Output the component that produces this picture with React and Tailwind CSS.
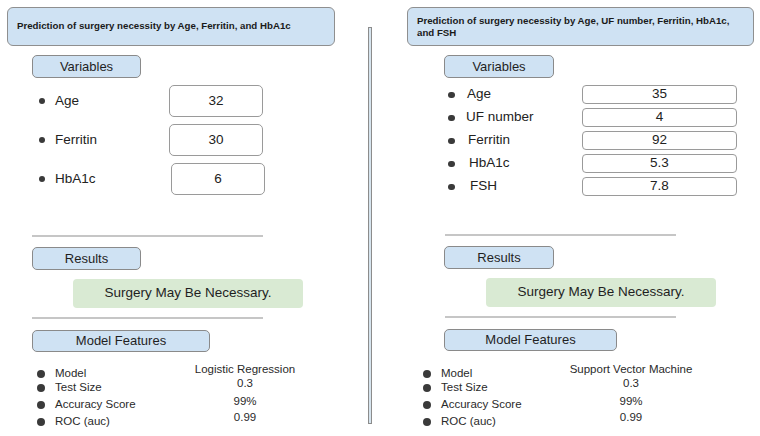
const font = { fontFamily: '"Liberation Sans", Arial, sans-serif' };

function Pill({ children, className = "" }) {
    return (
        <div className={`flex items-center justify-center rounded-[5px] border border-[#8a8a8a] bg-[#cfe2f3] text-[13px] text-[#1f1f1f] ${className}`}>
            {children}
        </div>
    );
}

function Divider() {
    return <div className="h-[2px] w-[231px] bg-[#c6c6c6]" />;
}

function Dot({ className = "" }) {
    return <span className={`block shrink-0 rounded-full bg-[#3a3a3a] ${className}`} />;
}

function Features({ model }) {
    const rows = [
        { label: "Model", value: model, lh: "h-[14px]", vh: "h-[14px]" },
        { label: "Test Size", value: "0.3", lh: "h-[14px] mt-[0px]", vh: "h-[14px] mt-[0px]" },
        { label: "Accuracy Score", value: "99%", lh: "h-[14px] mt-[3px]", vh: "h-[14px] mt-[4px]" },
        { label: "ROC (auc)", value: "0.99", lh: "h-[14px] mt-[3px]", vh: "h-[14px] mt-[2px]" },
    ];

    return (
        <div className="flex text-[11.5px] text-[#2a2a2a]">
            <div className="w-[138px] pt-[367px]">
                {rows.map((r) => (
                    <div key={r.label} className={`flex items-center ${r.lh}`}>
                        <Dot className="h-[8px] w-[8px]" />
                        <span className="ml-[10px] leading-none">{r.label}</span>
                    </div>
                ))}
            </div>
            <div className="w-[140px] pt-[363px]">
                {rows.map((r) => (
                    <div key={r.label} className={`flex items-center justify-center ${r.vh}`}>
                        <span className="leading-none">{r.value}</span>
                    </div>
                ))}
            </div>
        </div>
    );
}

function Result({ className = "" }) {
    return (
        <div className={`flex h-[29px] w-[230px] items-center justify-center rounded-[4px] bg-[#d9ead3] text-[13.5px] text-[#1f1f1f] ${className}`}>
            Surgery May Be Necessary.
        </div>
    );
}

function LeftPanel() {
    const vars = [
        { name: "Age", value: "32", shift: "" },
        { name: "Ferritin", value: "30", shift: "" },
        { name: "HbA1c", value: "6", shift: "ml-[2px]" },
    ];

    return (
        <div className="relative w-[368px] shrink-0">
            <div className="ml-[7px] mt-[7px] flex h-[39px] w-[328px] items-center rounded-[6px] border border-[#8f8f8f] bg-[#cfe2f3] pl-[9px] text-[9.7px] font-bold text-[#1a1a1a]">
                Prediction of surgery necessity by Age, Ferritin, and HbA1c
            </div>

            <div className="ml-[32px]">
                <Pill className="mt-[9px] h-[23px] w-[109px]">Variables</Pill>

                <div className="mt-[7px] flex flex-col gap-[7px]">
                    {vars.map((v) => (
                        <div key={v.name} className="flex h-[32px] items-center">
                            <div className="flex w-[137px] items-center">
                                <Dot className="ml-[7px] h-[6px] w-[6px]" />
                                <span className="ml-[10px] text-[13.5px] text-[#222]">{v.name}</span>
                            </div>
                            <div className={`flex h-[32px] w-[94px] items-center justify-center rounded-[5px] border border-[#9a9a9a] text-[13.5px] text-[#222] ${v.shift}`}>
                                {v.value}
                            </div>
                        </div>
                    ))}
                </div>

                <div className="mt-[40px]"><Divider /></div>
                <Pill className="mt-[10px] h-[23px] w-[109px]">Results</Pill>
                <Result className="ml-[41px] mt-[9px]" />
                <div className="mt-[9px]"><Divider /></div>
                <Pill className="mt-[11px] h-[22px] w-[178px] text-[13.3px]">Model Features</Pill>
            </div>

            <div className="absolute left-[37px] top-0">
                <Features model="Logistic Regression" />
            </div>
        </div>
    );
}

function RightPanel() {
    const vars = [
        { name: "Age", value: "35", pad: "ml-[12px]" },
        { name: "UF number", value: "4", pad: "ml-[11px]" },
        { name: "Ferritin", value: "92", pad: "ml-[13px]" },
        { name: "HbA1c", value: "5.3", pad: "ml-[14px]" },
        { name: "FSH", value: "7.8", pad: "ml-[15px]" },
    ];

    return (
        <div className="relative flex-1">
            <div className="ml-[35px] mt-[7px] flex h-[39px] w-[347px] items-center rounded-[6px] border border-[#8f8f8f] bg-[#cfe2f3] pl-[9px] pr-[20px] text-[9.7px] font-bold leading-[12px] text-[#1a1a1a]">
                Prediction of surgery necessity by Age, UF number, Ferritin, HbA1c, and FSH
            </div>

            <div className="ml-[72px]">
                <Pill className="mt-[9px] h-[23px] w-[110px]">Variables</Pill>

                <div className="mt-[7px] flex flex-col gap-[4px]">
                    {vars.map((v) => (
                        <div key={v.name} className="flex h-[19px] items-center">
                            <div className="flex w-[138px] items-center">
                                <Dot className="ml-[4px] h-[6px] w-[7px]" />
                                <span className={`text-[13.5px] text-[#222] ${v.pad}`}>{v.name}</span>
                            </div>
                            <div className="flex h-[19px] w-[155px] items-center justify-center rounded-[4px] border border-[#9a9a9a] text-[13.5px] text-[#222]">
                                {v.value}
                            </div>
                        </div>
                    ))}
                </div>

                <div className="ml-[1px] mt-[38px]"><Divider /></div>
                <Pill className="mt-[10px] h-[23px] w-[110px]">Results</Pill>
                <Result className="ml-[42px] mt-[9px] w-[229px]" />
                <div className="ml-[1px] mt-[9px]"><Divider /></div>
                <Pill className="mt-[11px] h-[22px] w-[173px] text-[13.3px]">Model Features</Pill>
            </div>

            <div className="absolute left-[51px] top-0">
                <Features model="Support Vector Machine" />
            </div>
        </div>
    );
}

export default function App() {
    return (
        <div className="flex h-[436px] w-[760px] overflow-hidden bg-white" style={font}>
            <LeftPanel />
            <div className="mt-[27px] h-[397px] w-[4px] shrink-0 border border-[#8c8c8c] bg-[#d6e4ee]" />
            <RightPanel />
        </div>
    );
}
